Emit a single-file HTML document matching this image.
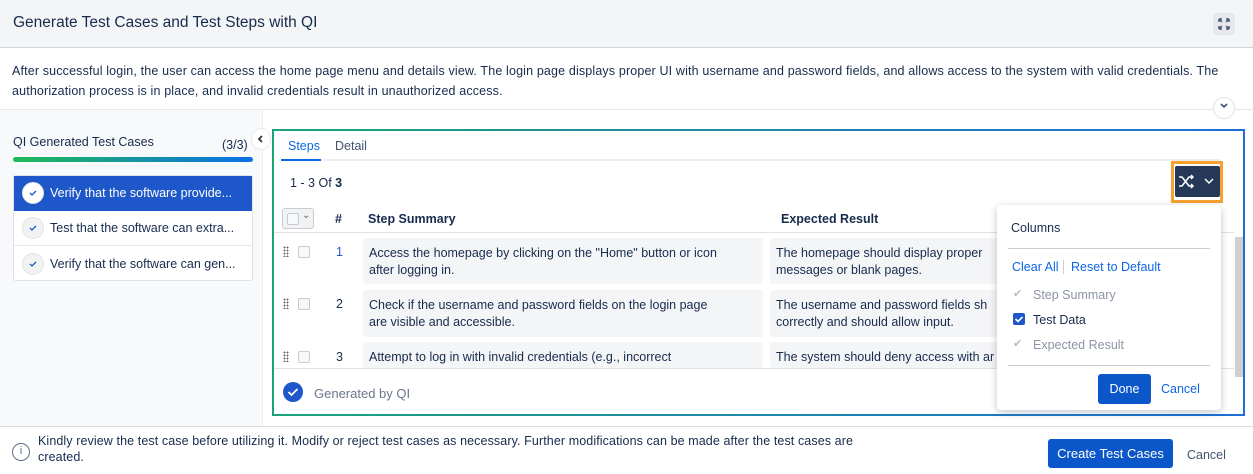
<!DOCTYPE html>
<html><head><style>
*{box-sizing:border-box;margin:0;padding:0}
body{width:1253px;height:474px;overflow:hidden;font-family:"Liberation Sans",sans-serif;font-size:12.5px;color:#172b4d;background:#fff;position:relative}
.abs{position:absolute}
.hdr{left:0;top:0;width:1253px;height:48px;background:#f4f5f7;border-bottom:1px solid #d0d3d8}
.hdr h1{position:absolute;left:13px;top:14px;font-size:15.5px;font-weight:normal;color:#172b4d}
.desc{left:12px;top:61px;width:1235px;line-height:20px;font-size:12.5px;letter-spacing:0.15px;color:#172b4d}
.side{left:0;top:110px;width:263px;height:316px;background:#f8f9fa;border-right:1px solid #eceef1}
.card{left:13px;top:175px;width:240px;height:106px;border:1px solid #dfe1e6;border-radius:3px;background:#fff}
.item{height:35px;display:flex;align-items:center;padding-left:8px;border-bottom:1px solid #e6e8eb;font-size:12.5px}
.ck{width:22px;height:22px;border-radius:50%;background:#f1f2f4;border:1px solid #e2e4e8;margin-right:6px;display:flex;align-items:center;justify-content:center}
.main{left:272px;top:129px;width:973px;height:287px;border:2px solid;border-image:linear-gradient(90deg,#1aa37a,#1e6fd9) 1;background:#fff}
.cell{position:absolute;background:#f4f5f7;border-radius:3px;padding:7px 6px 4px;line-height:17px}
.cb{position:absolute;width:12px;height:12px;border:1px solid #c9ccd2;border-radius:2px;background:#f7f8f9}
.grip{position:absolute;width:6px;height:11px;background-image:radial-gradient(#666 0.8px,transparent 1px);background-size:3px 3px}
.pop{left:997px;top:205px;width:224px;height:205px;background:#fff;border-radius:4px;box-shadow:0 2px 8px rgba(9,30,66,.25)}
.foot{left:0;top:426px;width:1253px;height:48px;border-top:1px solid #d8dbe0;background:#fff}
</style></head><body>
<div class="abs hdr"><h1>Generate Test Cases and Test Steps with QI</h1>
<div class="abs" style="left:1213px;top:13px;width:22px;height:22px;background:#e6e8ec;border-radius:3px">
<svg width="22" height="22" viewBox="0 0 22 22" fill="none" stroke="#44546f" stroke-width="1.5"><path d="M6 6l3 3M6 6v3M6 6h3M16 6l-3 3M16 6v3M16 6h-3M6 16l3-3M6 16v-3M6 16h3M16 16l-3-3M16 16v-3M16 16h-3"/></svg></div></div>
<div class="abs desc">After successful login, the user can access the home page menu and details view. The login page displays proper UI with username and password fields, and allows access to the system with valid credentials. The authorization process is in place, and invalid credentials result in unauthorized access.</div>
<div class="abs" style="left:0;top:109px;width:1253px;height:1px;background:#e6e8eb"></div>
<div class="abs" style="left:1213px;top:97px;width:22px;height:22px;border-radius:50%;background:#fff;border:1px solid #dfe1e6;text-align:center;font-size:10px;line-height:20px;color:#44546f">
<svg width="10" height="10" viewBox="0 0 10 10"><path d="M2 4l3 3 3-3" stroke="#44546f" stroke-width="1.6" fill="none"/></svg></div>
<div class="abs side"></div>
<div class="abs" style="left:13px;top:135px">QI Generated Test Cases</div>
<div class="abs" style="left:222px;top:138px">(3/3)</div>
<div class="abs" style="left:13px;top:157px;width:240px;height:5px;border-radius:3px;background:linear-gradient(90deg,#1fba55,#0b6fe8)"></div>
<div class="abs" style="left:251px;top:128px;width:20px;height:22px;border-radius:50%;background:#fff;border:1px solid #e6e8eb">
<svg width="18" height="20" viewBox="0 0 18 20"><path d="M10 7l-3 3 3 3" stroke="#333" stroke-width="1.8" fill="none"/></svg></div>
<div class="abs card">
<div class="item" style="background:#1d57c9;color:#fff;border-color:#1d57c9"><div class="ck" style="background:#fff"><svg width="10" height="10" viewBox="0 0 10 10"><path d="M2 5l2 2 4-4" stroke="#1d57c9" stroke-width="1.3" fill="none"/></svg></div>Verify that the software provide...</div>
<div class="item"><div class="ck"><svg width="10" height="10" viewBox="0 0 10 10"><path d="M2 5l2 2 4-4" stroke="#1d57c9" stroke-width="1.3" fill="none"/></svg></div>Test that the software can extra...</div>
<div class="item" style="border:0"><div class="ck"><svg width="10" height="10" viewBox="0 0 10 10"><path d="M2 5l2 2 4-4" stroke="#1d57c9" stroke-width="1.3" fill="none"/></svg></div>Verify that the software can gen...</div>
</div>
<div class="abs main"></div>
<div class="abs" style="left:288px;top:139px;color:#0c66e4">Steps</div>
<div class="abs" style="left:335px;top:139px;color:#44546f">Detail</div>
<div class="abs" style="left:281px;top:159px;width:940px;height:2px;background:#eceef1"></div>
<div class="abs" style="left:281px;top:159px;width:40px;height:2px;background:#0c66e4"></div>
<div class="abs" style="left:290px;top:176px">1 - 3 Of <b>3</b></div>
<div class="abs" style="left:1171px;top:161px;width:52px;height:42px;border:3px solid #f6a130;background:#fff"></div>
<div class="abs" style="left:1175px;top:166px;width:45px;height:31px;background:#253858;border-radius:2px">
<svg width="45" height="31" viewBox="0 0 45 31" fill="none" stroke="#fff" stroke-width="1.5"><path d="M4 11h3l7 9h4M4 20h3l7-9h4M16 9l2 2-2 2M16 18l2 2-2 2M30 13l4 4 4-4"/></svg></div>
<div class="abs" style="left:282px;top:208px;width:32px;height:21px;border:1px solid #c9ccd2;border-radius:3px;background:#f1f2f4"><div class="cb" style="left:4px;top:4px"></div><span class="abs" style="left:19px;top:1px;font-size:10px;color:#666">⌄</span></div>
<div class="abs" style="left:335px;top:212px;font-weight:bold">#</div>
<div class="abs" style="left:368px;top:212px;font-weight:bold">Step Summary</div>
<div class="abs" style="left:781px;top:212px;font-weight:bold">Expected Result</div>
<div class="abs" style="left:274px;top:232px;width:960px;height:1px;background:#dfe1e6"></div>
<div class="grip" style="left:283px;top:246px"></div><div class="cb" style="left:298px;top:246px"></div><div class="abs" style="left:336px;top:245px;color:#1d57c9">1</div>
<div class="cell" style="left:363px;top:238px;width:400px;height:46px">Access the homepage by clicking on the "Home" button or icon<br>after logging in.</div>
<div class="cell" style="left:770px;top:238px;width:240px;height:46px">The homepage should display proper<br>messages or blank pages.</div>
<div class="grip" style="left:283px;top:298px"></div><div class="cb" style="left:298px;top:298px"></div><div class="abs" style="left:336px;top:297px">2</div>
<div class="cell" style="left:363px;top:290px;width:400px;height:47px">Check if the username and password fields on the login page<br>are visible and accessible.</div>
<div class="cell" style="left:770px;top:290px;width:240px;height:47px">The username and password fields sh<br>correctly and should allow input.</div>
<div class="grip" style="left:283px;top:351px"></div><div class="cb" style="left:298px;top:351px"></div><div class="abs" style="left:336px;top:350px">3</div>
<div class="cell" style="left:363px;top:342px;width:400px;height:26px">Attempt to log in with invalid credentials (e.g., incorrect</div>
<div class="cell" style="left:770px;top:342px;width:240px;height:26px">The system should deny access with ar</div>
<div class="abs" style="left:274px;top:368px;width:960px;height:1px;background:#dfe1e6"></div>
<div class="abs" style="left:1235px;top:237px;width:8px;height:140px;background:#cfcfcf"></div>
<div class="abs" style="left:283px;top:382px;width:20px;height:20px;border-radius:50%;background:#1d57c9"><svg width="20" height="20" viewBox="0 0 20 20"><path d="M5.5 10l3 3 6-6" stroke="#fff" stroke-width="1.8" fill="none"/></svg></div>
<div class="abs" style="left:314px;top:386px;color:#6b778c;font-size:13px">Generated by QI</div>
<div class="abs pop">
<div class="abs" style="left:14px;top:16px;color:#172b4d">Columns</div>
<div class="abs" style="left:11px;top:43px;width:202px;height:1px;background:#ccc"></div>
<div class="abs" style="left:15px;top:55px;color:#0c66e4">Clear All</div>
<div class="abs" style="left:66px;top:55px;width:1px;height:14px;background:#ccc"></div>
<div class="abs" style="left:74px;top:55px;color:#0c66e4">Reset to Default</div>
<div class="abs" style="left:16px;top:82px;color:#bbb;font-size:11px">✔</div><div class="abs" style="left:36px;top:83px;color:#8c95a3">Step Summary</div>
<div class="abs" style="left:16px;top:108px;width:12px;height:12px;background:#1d57c9;border-radius:2px"><svg width="12" height="12" viewBox="0 0 12 12"><path d="M2.5 6l2.5 2.5 4.5-4.5" stroke="#fff" stroke-width="1.6" fill="none"/></svg></div><div class="abs" style="left:36px;top:108px">Test Data</div>
<div class="abs" style="left:16px;top:132px;color:#bbb;font-size:11px">✔</div><div class="abs" style="left:36px;top:133px;color:#8c95a3">Expected Result</div>
<div class="abs" style="left:11px;top:160px;width:202px;height:1px;background:#ccc"></div>
<div class="abs" style="left:101px;top:169px;width:53px;height:30px;background:#0b56c9;border-radius:3px;color:#fff;text-align:center;line-height:30px">Done</div>
<div class="abs" style="left:164px;top:177px;color:#0c66e4">Cancel</div>
</div>
<div class="abs foot">
<div class="abs" style="left:12px;top:16px;width:18px;height:18px;border-radius:50%;border:1.5px solid #5e6c84;text-align:center;font-size:11px;line-height:15px;color:#5e6c84">i</div>
<div class="abs" style="left:38px;top:6px;width:850px;line-height:16px;font-size:12.5px;letter-spacing:0.1px">Kindly review the test case before utilizing it. Modify or reject test cases as necessary. Further modifications can be made after the test cases are created.</div>
<div class="abs" style="left:1048px;top:12px;width:125px;height:29px;background:#0b56c9;border-radius:3px;color:#fff;text-align:center;line-height:29px;font-size:13px">Create Test Cases</div>
<div class="abs" style="left:1187px;top:21px;color:#44546f">Cancel</div>
</div>
</body></html>
